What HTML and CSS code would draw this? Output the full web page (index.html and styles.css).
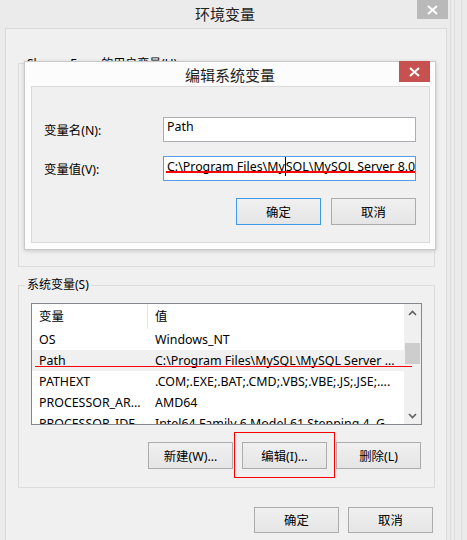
FILE: index.html
```html
<!DOCTYPE html>
<html lang="zh-CN">
<head>
<meta charset="utf-8">
<title>环境变量</title>
<link rel="stylesheet" href="styles.css">
</head>
<body>
<div class="screen">
  <div class="window">
    <div class="titlebar">
      <div class="title">环境变量</div>
      <div class="close close-inactive">
        <svg width="11" height="10" viewBox="0 0 11 10"><path d="M1 1 L10 9 M10 1 L1 9" stroke="#fff" stroke-width="2"/></svg>
      </div>
    </div>
    <div class="client">
      <fieldset class="group group-user">
        <legend>Sharon Feng 的用户变量(U)</legend>
        <div class="group-spacer"></div>
      </fieldset>
      <fieldset class="group group-system">
        <legend>系统变量(S)</legend>
        <div class="list">
          <div class="list-body">
            <div class="list-head">
              <div class="cell c1 head-cell">变量</div>
              <div class="cell c2">值</div>
            </div>
            <div class="row"><div class="cell c1">OS</div><div class="cell c2">Windows_NT</div></div>
            <div class="row row-selected"><div class="cell c1">Path</div><div class="cell c2">C:\Program Files\MySQL\MySQL Server ...</div></div>
            <div class="row"><div class="cell c1">PATHEXT</div><div class="cell c2">.COM;.EXE;.BAT;.CMD;.VBS;.VBE;.JS;.JSE;....</div></div>
            <div class="row"><div class="cell c1">PROCESSOR_AR...</div><div class="cell c2">AMD64</div></div>
            <div class="row"><div class="cell c1">PROCESSOR_IDE...</div><div class="cell c2">Intel64 Family 6 Model 61 Stepping 4, G</div></div>
          </div>
          <div class="scrollbar">
            <div class="sb-arrow">
              <svg width="9" height="6" viewBox="0 0 9 6"><path d="M1 5 L4.5 1.5 L8 5" stroke="#606060" stroke-width="1.6" fill="none"/></svg>
            </div>
            <div class="sb-track"><div class="sb-thumb"></div></div>
            <div class="sb-arrow">
              <svg width="9" height="6" viewBox="0 0 9 6"><path d="M1 1 L4.5 4.5 L8 1" stroke="#606060" stroke-width="1.6" fill="none"/></svg>
            </div>
          </div>
        </div>
        <div class="btnrow group-buttons">
          <button class="btn">新建(W)...</button>
          <button class="btn">编辑(I)...</button>
          <button class="btn">删除(L)</button>
        </div>
      </fieldset>
      <div class="btnrow main-buttons">
        <button class="btn">确定</button>
        <button class="btn">取消</button>
      </div>
    </div>
  </div>
  <div class="rail"></div>
  <div class="rail rail-outer"></div>

  <div class="dialog">
    <div class="dialog-titlebar">
      <div class="dialog-title">编辑系统变量</div>
      <div class="close close-active">
        <svg width="11" height="10" viewBox="0 0 11 10"><path d="M1 1 L10 9 M10 1 L1 9" stroke="#fff" stroke-width="2"/></svg>
      </div>
    </div>
    <div class="dialog-client">
      <div class="field">
        <label class="field-label">变量名(N):</label>
        <div class="textbox">Path</div>
      </div>
      <div class="field field-value">
        <label class="field-label">变量值(V):</label>
        <div class="textbox textbox-focus">
          <span class="tb-text">C:\Program Files\My<span class="caret"></span>SQL\MySQL Server 8.0\bin</span>
          <span class="tb-underline"></span>
        </div>
      </div>
      <div class="btnrow dialog-buttons">
        <button class="btn btn-default">确定</button>
        <button class="btn">取消</button>
      </div>
    </div>
  </div>

  <div class="mark-line"></div>
  <div class="mark-box"></div>
</div>
</body>
</html>
```

FILE: styles.css
```css
* { box-sizing: border-box; }
html, body { margin: 0; padding: 0; }
body {
  font-family: "Noto Sans", "Noto Sans CJK SC", sans-serif;
  font-size: 12.4px;
  color: #000;
  background: #ebebeb;
}
.screen {
  position: relative;
  width: 467px;
  height: 540px;
  overflow: hidden;
  display: flex;
  background: #ebebeb;
}
.window {
  width: 450px;
  height: 540px;
  display: flex;
  flex-direction: column;
  flex: none;
}
.titlebar {
  height: 28px;
  display: flex;
  align-items: flex-start;
  position: relative;
}
.title {
  position: absolute;
  left: 0; right: 0; top: 4px;
  text-align: center;
  font-family: "Noto Sans CJK SC", sans-serif;
  font-size: 15px;
  line-height: 20px;
  color: #222;
}
.close {
  width: 31px;
  height: 20px;
  display: flex;
  align-items: center;
  justify-content: center;
}
.close-inactive {
  margin-left: auto;
  margin-right: 2px;
  background: #b9b9b9;
  height: 19px;
}
.close-active {
  background: #c75050;
  height: 21px;
}
.client {
  flex: 1;
  margin: 0 3px 0 5px;
  background: #f0f0f0;
  border: 1px solid #dadada;
  border-bottom: none;
  padding: 26px 11px 0 12px;
}
.group {
  margin: 0;
  border: 1px solid #dcdcdc;
  padding: 0 12px;
  min-width: 0;
}
.group legend {
  margin-left: -6px;
  padding: 0 2px;
  height: 16px;
  line-height: 16px;
  font-size: 12px;
}
.group-user legend { padding-top: 1px; }
.group-spacer { height: 195px; }
.group-system {
  margin-top: 10px;
  padding: 10px 12px 18px;
}
.list {
  height: 122px;
  border: 1px solid #828790;
  background: #fff;
  display: flex;
  overflow: hidden;
}
.list-body {
  flex: 1;
  min-width: 0;
  overflow: hidden;
}
.list-head {
  height: 25px;
  display: flex;
  align-items: center;
}
.list-head .c1 { border-right: 1px solid #e5e5e5; height: 25px; }
.row {
  height: 21px;
  display: flex;
  align-items: center;
}
.row-selected { background: #f0f0f0; }
.cell {
  white-space: nowrap;
  overflow: hidden;
  line-height: 21px;
}
.c1 { width: 116px; padding-left: 7px; flex: none; }
.list-head .cell { line-height: 25px; }
.c2 { flex: 1; padding-left: 7px; }
.scrollbar {
  width: 17px;
  flex: none;
  background: #f0f0f0;
  display: flex;
  flex-direction: column;
}
.sb-arrow {
  height: 17px;
  display: flex;
  align-items: center;
  justify-content: center;
}
.sb-track {
  flex: 1;
  padding: 22px 1px 0;
}
.sb-thumb {
  height: 21px;
  background: #cdcdcd;
}
.btnrow {
  display: flex;
  justify-content: flex-end;
  gap: 9px;
}
.group-buttons {
  margin-top: 17px;
  margin-right: 1px;
}
.btn {
  width: 85px;
  height: 27px;
  font-family: "Noto Sans", "Noto Sans CJK SC", sans-serif;
  font-size: 12.4px;
  color: #000;
  border: 1px solid #acacac;
  background: linear-gradient(#f0f0f0, #e5e5e5);
  padding: 0;
  margin: 0;
}
.main-buttons {
  margin-top: 19px;
  margin-right: 2px;
}
.main-buttons .btn { height: 26px; }
.rail {
  width: 5px;
  flex: none;
  border-right: 1px solid #dcdcdc;
  border-left: 1px solid #dcdcdc;
}
.rail-outer { width: 7px; border-left: none; }

.dialog {
  position: absolute;
  left: 24px;
  top: 61px;
  width: 412px;
  height: 189px;
  background: #fcfcfc;
  border: 1px solid #c9c9c9;
  box-shadow: 0 1px 4px rgba(0,0,0,0.18);
  display: flex;
  flex-direction: column;
}
.dialog-titlebar {
  height: 25px;
  position: relative;
  display: flex;
  justify-content: flex-end;
  padding-right: 5px;
  margin-top: -1px;
}
.dialog-title {
  position: absolute;
  left: 0; right: 0; top: 4px;
  text-align: center;
  font-family: "Noto Sans CJK SC", sans-serif;
  font-size: 15px;
  line-height: 20px;
  color: #222;
}
.dialog-client {
  flex: 1;
  margin: 0 5px 6px 6px;
  background: #f0f0f0;
  border: 1px solid #dadada;
  padding: 30px 13px 0 12px;
}
.field {
  display: flex;
  align-items: center;
  height: 25px;
}
.field-value { margin-top: 14px; }
.field-label {
  width: 119px;
  flex: none;
}
.textbox {
  flex: 1;
  height: 25px;
  border: 1px solid #abadb3;
  background: #fff;
  padding-left: 3px;
  line-height: 17px;
  white-space: nowrap;
  overflow: hidden;
  position: relative;
}
.textbox-focus { border-color: #569de5; }
.caret {
  display: inline-block;
  width: 1px;
  height: 19px;
  background: #000;
  vertical-align: -5px;
}
.tb-underline {
  position: absolute;
  left: 2px; right: 0;
  top: 14px;
  height: 2px;
  background: #f00;
}
.dialog-buttons { margin-top: 17px; gap: 10px; }
.btn-default { border-color: #3c9ae8; }

.mark-line {
  position: absolute;
  left: 35px;
  top: 366px;
  width: 377px;
  height: 1px;
  background: #f00;
}
.mark-box {
  position: absolute;
  left: 234px;
  top: 432px;
  width: 101px;
  height: 46px;
  border: 1px solid #f00;
}
```
